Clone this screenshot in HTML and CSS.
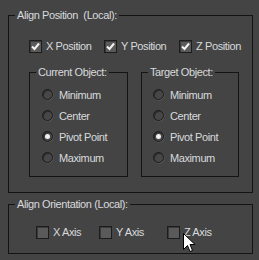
FILE: index.html
```html
<!DOCTYPE html>
<html lang="en">
<head>
  <meta charset="UTF-8">
  <title>Align Selection</title>
  <link rel="stylesheet" href="styles.css">
</head>
<body>
<div class="panel">
  <fieldset class="group pos-group">
    <legend>Align Position&nbsp; (Local):</legend>
    <div class="group-body">
      <div class="axis-row">
        <label class="check"><span class="box on"><svg viewBox="0 0 11 11"><path d="M2 5.5 L4.5 8 L9 2.5"/></svg></span>X Position</label>
        <label class="check"><span class="box on"><svg viewBox="0 0 11 11"><path d="M2 5.5 L4.5 8 L9 2.5"/></svg></span>Y Position</label>
        <label class="check"><span class="box on"><svg viewBox="0 0 11 11"><path d="M2 5.5 L4.5 8 L9 2.5"/></svg></span>Z Position</label>
      </div>
      <div class="objects">
        <fieldset class="group sub current">
          <legend>Current Object:</legend>
          <div class="radio-list">
            <label class="radio"><span class="dot"></span>Minimum</label>
            <label class="radio"><span class="dot"></span>Center</label>
            <label class="radio"><span class="dot on"></span>Pivot Point</label>
            <label class="radio"><span class="dot"></span>Maximum</label>
          </div>
        </fieldset>
        <fieldset class="group sub target">
          <legend>Target Object:</legend>
          <div class="radio-list">
            <label class="radio"><span class="dot"></span>Minimum</label>
            <label class="radio"><span class="dot"></span>Center</label>
            <label class="radio"><span class="dot on"></span>Pivot Point</label>
            <label class="radio"><span class="dot"></span>Maximum</label>
          </div>
        </fieldset>
      </div>
    </div>
  </fieldset>

  <fieldset class="group orient-group">
    <legend>Align Orientation (Local):</legend>
    <div class="group-body">
      <div class="axis-row orient">
        <label class="check"><span class="box"></span>X Axis</label>
        <label class="check"><span class="box"></span>Y Axis</label>
        <label class="check"><span class="box"></span>Z Axis</label>
      </div>
    </div>
  </fieldset>

  <svg class="cursor" width="13" height="21" viewBox="0 0 13 21">
    <path d="M0.5 0.5 L0.5 16.5 L4.5 12.5 L7 18.5 L9.5 17.5 L7 11.5 L12 11.5 Z" fill="#fff" stroke="#000"/>
  </svg>
</div>
</body>
</html>
```

FILE: styles.css
```css
* { box-sizing: border-box; }
body {
  margin: 0;
  background: #444444;
  color: #d8dadd;
  font-family: 'Liberation Sans', Arial, sans-serif;
  font-size: 11px;
  letter-spacing: -0.4px;
}
.panel {
  position: relative;
  width: 259px;
  height: 260px;
  padding: 8px 0 0 8px;
}
.group {
  margin: 0;
  padding: 0;
  border: 1px solid #141414;
  min-width: 0;
}
.group legend {
  margin-left: 6px;
  padding: 0 2px;
  line-height: 14px;
  height: 14px;
}
.pos-group { width: 245px; }
.pos-group > .group-body { padding: 18px 0 15px 20px; }
.axis-row {
  display: grid;
  grid-template-columns: 75px 75px auto;
  height: 13px;
}
.check {
  display: flex;
  align-items: center;
  gap: 4px;
  line-height: 13px;
}
.box {
  width: 13px;
  height: 13px;
  border: 1px solid #1c1c1c;
  background: #5a5a5a;
  box-shadow: inset 1px 1px 0 #3a3a3a;
  display: flex;
  align-items: center;
  justify-content: center;
}
.box svg {
  width: 11px;
  height: 11px;
  fill: none;
  stroke: #f2f2f2;
  stroke-width: 2;
}
.objects {
  display: flex;
  gap: 13px;
  margin-top: 12px;
}
.current { width: 99px; }
.target { width: 98px; }
.radio-list { padding: 5px 0 8px 12px; }
.target .radio-list { padding-left: 11px; }
.radio {
  display: flex;
  align-items: center;
  gap: 6px;
  height: 21px;
}
.dot {
  position: relative;
  width: 11px;
  height: 11px;
  border-radius: 50%;
  background: #474747;
  border: 1px solid #1a1a1a;
  box-shadow: inset 1px 1px 0 #2c2c2c, 0.5px 0.5px 0 #5c5c5c;
}
.dot.on::after {
  content: "";
  position: absolute;
  left: 2px;
  top: 2px;
  width: 5px;
  height: 5px;
  border-radius: 50%;
  background: #f0f0f0;
}
.orient-group {
  width: 245px;
  margin-top: 4px;
}
.orient-group > .group-body { padding: 15px 0 14px 27px; }
.orient { grid-template-columns: 63px 68px auto; }
.cursor {
  position: absolute;
  left: 183px;
  top: 233px;
}
```
